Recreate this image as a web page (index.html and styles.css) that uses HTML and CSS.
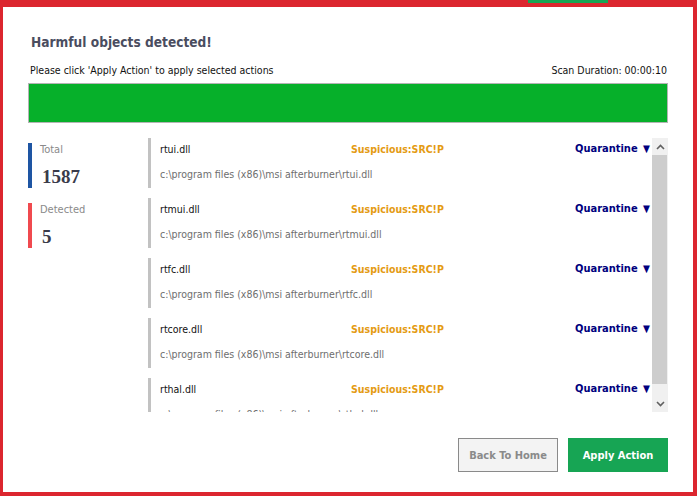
FILE: index.html
```html
<!DOCTYPE html>
<html>
<head>
<meta charset="utf-8">
<link rel="stylesheet" href="styles.css">
</head>
<body>
<div class="frame">
  <div class="tab"></div>
  <div class="panel">
    <h1 class="title">Harmful objects detected!</h1>
    <div class="infoline">
      <span>Please click 'Apply Action' to apply selected actions</span>
      <span>Scan Duration: 00:00:10</span>
    </div>
    <div class="progress"><div class="progress-fill"></div></div>
    <div class="main">
      <div class="stats">
        <div class="stat stat-total">
          <div class="stat-label">Total</div>
          <div class="stat-value">1587</div>
        </div>
        <div class="stat stat-detected">
          <div class="stat-label">Detected</div>
          <div class="stat-value">5</div>
        </div>
      </div>
      <div class="listwrap">
        <div class="list">
          <div class="item">
            <div class="name">rtui.dll</div>
            <div class="status">Suspicious:SRC!P</div>
            <div class="action">Quarantine <span class="tri">▼</span></div>
            <div class="path">c:\program files (x86)\msi afterburner\rtui.dll</div>
          </div>
          <div class="item">
            <div class="name">rtmui.dll</div>
            <div class="status">Suspicious:SRC!P</div>
            <div class="action">Quarantine <span class="tri">▼</span></div>
            <div class="path">c:\program files (x86)\msi afterburner\rtmui.dll</div>
          </div>
          <div class="item">
            <div class="name">rtfc.dll</div>
            <div class="status">Suspicious:SRC!P</div>
            <div class="action">Quarantine <span class="tri">▼</span></div>
            <div class="path">c:\program files (x86)\msi afterburner\rtfc.dll</div>
          </div>
          <div class="item">
            <div class="name">rtcore.dll</div>
            <div class="status">Suspicious:SRC!P</div>
            <div class="action">Quarantine <span class="tri">▼</span></div>
            <div class="path">c:\program files (x86)\msi afterburner\rtcore.dll</div>
          </div>
          <div class="item">
            <div class="name">rthal.dll</div>
            <div class="status">Suspicious:SRC!P</div>
            <div class="action">Quarantine <span class="tri">▼</span></div>
            <div class="path">c:\program files (x86)\msi afterburner\rthal.dll</div>
          </div>
        </div>
        <div class="scrollbar">
          <div class="sb-btn"><svg width="9" height="6" viewBox="0 0 9 6"><path d="M1 5 L4.5 1.5 L8 5" fill="none" stroke="#606060" stroke-width="1.6"/></svg></div>
          <div class="sb-track"><div class="sb-thumb"></div></div>
          <div class="sb-btn"><svg width="9" height="6" viewBox="0 0 9 6"><path d="M1 1 L4.5 4.5 L8 1" fill="none" stroke="#606060" stroke-width="1.6"/></svg></div>
        </div>
      </div>
    </div>
    <div class="buttons">
      <button class="btn btn-back">Back To Home</button>
      <button class="btn btn-apply">Apply Action</button>
    </div>
  </div>
</div>
</body>
</html>
```

FILE: styles.css
```css
* { box-sizing: border-box; }
html, body { margin: 0; padding: 0; }
body {
  width: 697px;
  height: 496px;
  background: #dc262f;
  font-family: "DejaVu Sans Condensed", "DejaVu Sans", sans-serif;
  overflow: hidden;
}
.frame {
  position: relative;
  width: 697px;
  height: 496px;
  padding: 7px 4px 4px 3px;
}
.tab {
  position: absolute;
  left: 528px;
  top: 0;
  width: 80px;
  height: 3px;
  background: #17a554;
}
.panel {
  background: #fff;
  height: 485px;
  padding: 0 25px 0 25px;
  display: flex;
  flex-direction: column;
}
.title {
  margin: 26px 0 0 3px;
  font-size: 13.6px;
  line-height: 18px;
  font-weight: bold;
  color: #4a4d5f;
  font-family: "DejaVu Sans Condensed", "DejaVu Sans", sans-serif;
}
.infoline {
  margin-top: 12px;
  display: flex;
  justify-content: space-between;
  font-size: 10.5px;
  line-height: 14px;
  color: #111;
  padding-left: 2px;
  padding-right: 1px;
}
.progress {
  margin-top: 6px;
  height: 40px;
  border: 1px solid #b4b4b4;
  background: #eee;
}
.progress-fill {
  width: 100%;
  height: 100%;
  background: #06b02a;
}
.main {
  margin-top: 15px;
  display: flex;
  height: 274px;
}
.stats {
  width: 120px;
  flex: none;
  padding-top: 5px;
  display: flex;
  flex-direction: column;
  gap: 15px;
}
.stat {
  height: 45px;
  border-left: 4px solid #1e55a3;
  padding-left: 8px;
}
.stat-detected { border-left-color: #f04a4f; }
.stat-label {
  font-size: 11px;
  line-height: 14px;
  color: #8a8a8a;
}
.stat-value {
  margin-top: 11px;
  font-family: "Liberation Serif", "DejaVu Serif", serif;
  font-weight: bold;
  font-size: 19px;
  line-height: 18px;
  color: #3a3b4a;
  padding-left: 2px;
}
.listwrap {
  flex: 1;
  display: flex;
  height: 274px;
}
.list {
  flex: 1;
  overflow: hidden;
  display: flex;
  flex-direction: column;
  gap: 10px;
}
.item {
  flex: none;
  height: 50px;
  border-left: 3px solid #c2c2c2;
  padding: 4px 2px 0 9px;
  display: grid;
  grid-template-columns: 191px 1fr auto;
  grid-template-rows: 14px 14px;
  row-gap: 11px;
  font-size: 10.5px;
  line-height: 14px;
}
.name { color: #111; }
.status {
  color: #e49b13;
  font-weight: bold;
  font-family: "DejaVu Sans Condensed", "DejaVu Sans", sans-serif;
}
.action {
  color: #00007e;
  font-weight: bold;
  font-size: 11px;
}
.tri { font-size: 10px; margin-left: 2px; }
.path {
  grid-column: 1 / 4;
  color: #6e6e6e;
}
.scrollbar {
  width: 16px;
  flex: none;
  background: #f0f0f0;
  display: flex;
  flex-direction: column;
}
.sb-btn {
  height: 17px;
  display: flex;
  align-items: center;
  justify-content: center;
}
.sb-track {
  flex: 1;
  padding: 0 1px 0 0;
}
.sb-thumb {
  height: 229px;
  background: #cdcdcd;
}
.buttons {
  margin-top: 26px;
  display: flex;
  justify-content: flex-end;
  gap: 10px;
}
.btn {
  width: 100px;
  height: 34px;
  font-family: "DejaVu Sans Condensed", "DejaVu Sans", sans-serif;
  font-size: 11px;
  font-weight: bold;
  border: none;
  padding: 0;
}
.btn-back {
  background: #f3f3f3;
  border: 1px solid #8a8a8a;
  color: #8a8a8a;
}
.btn-apply {
  background: #17a554;
  color: #fff;
}
```
